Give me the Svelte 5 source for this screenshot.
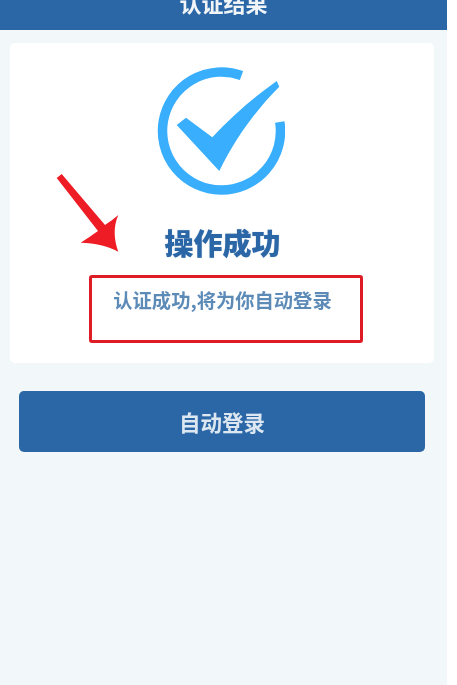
<script>
  const title = '认证结果';
</script>

<div class="page">
  <header class="bar"><h1>{title}</h1></header>
  <main class="card">
    <svg class="check" viewBox="157 67 128 128" width="128" height="128" aria-hidden="true">
      <path class="ring" d="M241.5 75.5 A59 59 0 1 0 279.8 122" />
      <path class="tick" d="M176.7 125 L186 117.7 L212.3 137.3 C232 116 254 97 276.7 81 L279.3 86.7 C257 109 236 137 219.3 171 Z" />
    </svg>
    <h2>操作成功</h2>
    <div class="note"><p>认证成功,将为你自动登录</p></div>
  </main>
  <button class="action">自动登录</button>
  <svg class="arrow" viewBox="0 0 457 685" width="457" height="685" aria-hidden="true">
    <path d="M56.7 178 L61.7 174 L105 225 C109 222 114 219 118.3 215 C113 227 114 240 118.3 251.7 C108 246 95 243 80.7 242.7 C87 239 92 235 98 231 Z" />
  </svg>
</div>

<style>
  :global(body) {
    margin: 0;
    background: #fff;
  }
  .page {
    position: relative;
    width: 447px;
    height: 685px;
    overflow: hidden;
    background: #f2f7fa;
    font-family: "Noto Sans CJK SC", "Noto Sans", sans-serif;
    filter: blur(0.4px);
  }
  .bar {
    height: 30px;
    overflow: hidden;
    background: #2b67a6;
    text-align: center;
  }
  h1 {
    margin: -10px 0 0;
    font-size: 22px;
    line-height: 24px;
    font-weight: 700;
    color: #f1f5f8;
  }
  .card {
    display: flex;
    flex-direction: column;
    align-items: center;
    width: 424px;
    height: 320px;
    margin: 13px 0 0 10px;
    padding: 24px 0 20px;
    box-sizing: border-box;
    background: #fff;
    border-radius: 5px;
  }
  .check {
    display: block;
    flex: none;
    margin-right: 2px;
  }
  .ring {
    fill: none;
    stroke: #38aefc;
    stroke-width: 9.5;
  }
  .tick {
    fill: #38aefc;
  }
  h2 {
    margin: 27px 0 0 1px;
    font-size: 29px;
    line-height: 40px;
    font-weight: 900;
    color: #2b67a6;
    text-shadow: 0 0 1px rgba(43, 103, 166, 0.5);
  }
  .note {
    box-sizing: border-box;
    width: 274px;
    height: 69px;
    margin: 13px 0 0 7px;
    padding: 10px 6px 0 0;
    border: 3.5px solid #dd1c26;
    border-radius: 3px;
    text-align: center;
  }
  .note p {
    margin: 0;
    font-size: 19.3px;
    line-height: 24px;
    font-weight: 700;
    color: #5d8bb8;
    white-space: nowrap;
  }
  .action {
    display: block;
    width: 406px;
    height: 61px;
    margin: 28px 0 0 19px;
    padding: 0;
    border: 0;
    border-radius: 5px;
    background: #2b67a6;
    color: #dce7f1;
    font: 700 21.5px/61px "Noto Sans CJK SC", "Noto Sans", sans-serif;
  }
  .arrow {
    position: absolute;
    top: 0;
    left: 0;
    pointer-events: none;
  }
  .arrow path {
    fill: #ee1c25;
  }
</style>
